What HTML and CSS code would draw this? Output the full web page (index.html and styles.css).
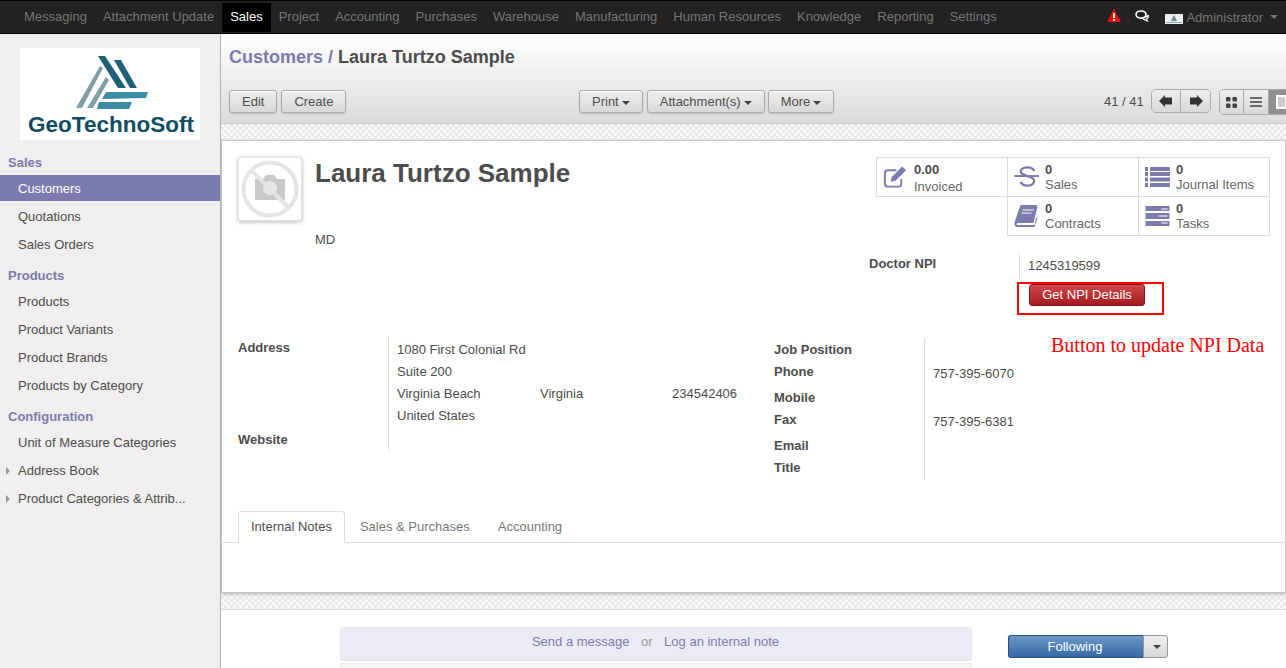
FILE: index.html
```html
<!DOCTYPE html>
<html lang="en">
<head>
<meta charset="utf-8">
<title>Customers</title>
<link rel="stylesheet" href="styles.css">
</head>
<body>
<nav class="topbar">
  <ul class="topmenu">
    <li>Messaging</li><li>Attachment Update</li><li class="active">Sales</li><li>Project</li><li>Accounting</li><li>Purchases</li><li>Warehouse</li><li>Manufacturing</li><li>Human Resources</li><li>Knowledge</li><li>Reporting</li><li>Settings</li>
  </ul>
  <div class="topright">
    <svg class="i-warn" width="14" height="13" viewBox="0 0 14 13"><path d="M7 0 14 13H0Z" fill="#f00"/><rect x="6" y="4" width="2" height="5" fill="#fff"/><rect x="6" y="10" width="2" height="2" fill="#fff"/></svg>
    <svg class="i-chat" width="14" height="12" viewBox="0 0 14 12"><ellipse cx="6" cy="4.5" rx="5" ry="3.5" fill="#222" stroke="#fff" stroke-width="1.6"/><path d="M10 7c2-.3 3-1 3-2 .8 2-.2 3.5-1.500 4l.8 2-3-1.600H8" fill="none" stroke="#fff" stroke-width="1.300"/></svg>
    <svg class="i-avatar" width="18" height="10" viewBox="0 0 18 10"><rect width="18" height="10" fill="#eee"/><path d="M9 1l3 6H6Z" fill="#5f8da0"/><rect x="1" y="8" width="16" height="1" fill="#8aa"/></svg>
    <span class="admin">Administrator</span><span class="caret caret-admin"></span>
  </div>
</nav>
<div class="app">
  <aside class="sidebar">
    <div class="logo">
      <svg class="logo-mark" width="76" height="56" viewBox="0 0 76 56">
        <path d="M22 1h7l21 32h-8Z" fill="#1f5f78"/><path d="M38 5h7l16 28h-7Z" fill="#1f5f78"/>
        <path d="M24 11l3 2L6 53H0Z" fill="#7f9ea8"/><path d="M30 22l3 3L17 53H11Z" fill="#7f9ea8"/>
        <path d="M30 37h42l-2 6-44 1Z" fill="#3d8ca6"/><path d="M23 47h33l-3 7H21Z" fill="#3d8ca6"/>
      </svg>
      <span class="logo-text">GeoTechnoSoft</span>
    </div>
    <h4 class="side-h first">Sales</h4>
    <a class="side-i cur">Customers</a><a class="side-i">Quotations</a><a class="side-i">Sales Orders</a>
    <h4 class="side-h">Products</h4>
    <a class="side-i">Products</a><a class="side-i">Product Variants</a><a class="side-i">Product Brands</a><a class="side-i">Products by Category</a>
    <h4 class="side-h">Configuration</h4>
    <a class="side-i">Unit of Measure Categories</a>
    <a class="side-i tree">Address Book</a>
    <a class="side-i tree">Product Categories &amp; Attrib...</a>
  </aside>
  <main class="main">
    <header class="cp">
      <h2 class="crumb"><span class="crumb-link">Customers</span><span class="crumb-sep"> / </span>Laura Turtzo Sample</h2>
      <div class="cp-row">
        <div class="cp-left"><button class="btn">Edit</button><button class="btn">Create</button></div>
        <div class="cp-mid">
          <button class="btn">Print<span class="caret"></span></button>
          <button class="btn">Attachment(s)<span class="caret"></span></button>
          <button class="btn btn-more">More<span class="caret"></span></button>
        </div>
        <div class="cp-right">
          <span class="pager">41 / 41</span>
          <div class="seg">
            <button class="seg-b"><svg width="14" height="12" viewBox="0 0 14 12"><path d="M0 6 6 0v2.500h7v7H6V12Z" fill="#333"/></svg></button>
            <button class="seg-b"><svg width="14" height="12" viewBox="0 0 14 12"><path d="M14 6 8 0v2.500H1v7h7V12Z" fill="#333"/></svg></button>
          </div>
          <div class="seg seg-view">
            <button class="seg-v"><svg width="11" height="11" viewBox="0 0 11 11"><rect width="4.500" height="4.500" rx="1" fill="#444"/><rect x="6.500" width="4.500" height="4.500" rx="1" fill="#444"/><rect y="6.500" width="4.500" height="4.500" rx="1" fill="#444"/><rect x="6.500" y="6.500" width="4.500" height="4.500" rx="1" fill="#444"/></svg></button>
            <button class="seg-v"><svg width="12" height="10" viewBox="0 0 12 10"><path d="M0 1h12M0 5h12M0 9h12" stroke="#444" stroke-width="1.600"/></svg></button>
            <button class="seg-v on"><span class="form-ico"></span></button>
          </div>
        </div>
      </div>
    </header>
    <div class="pattern top"></div>
    <section class="sheet">
      <div class="head">
        <div class="avatar">
          <svg width="62" height="62" viewBox="0 0 62 62">
            <circle cx="31" cy="31" r="26.500" fill="none" stroke="#e4e4e4" stroke-width="4"/>
            <path d="M16 21h8l3-4h8l3 4h8v21H16Z" fill="#c9c9c9"/><circle cx="31" cy="30" r="7" fill="#e6e6e6"/>
            <path d="M12 12 50 50" stroke="#e4e4e4" stroke-width="4"/>
          </svg>
        </div>
        <div class="who">
          <h1 class="name">Laura Turtzo Sample</h1>
          <div class="job">MD</div>
        </div>
        <div class="stats">
          <div class="stat">
            <svg class="si" width="25" height="24" viewBox="0 0 26 24"><path d="M19 14v5a3 3 0 0 1-3 3H5a3 3 0 0 1-3-3V8a3 3 0 0 1 3-3h9" fill="none" stroke="#7c7bad" stroke-width="2"/><path d="M9 12 20 1l4 4-11 11-5 1Z" fill="#7c7bad"/></svg>
            <div class="st st-inv"><b>0.00</b><span>Invoiced</span></div>
          </div>
          <div class="stat">
            <svg class="si" width="25" height="24" viewBox="0 0 26 24"><path d="M21 6c-1-3-3-4-7-4-4 0-7 2-7 4 0 3 4 4 7 5 3 1 7 2 7 5 0 3-3 5-7 5s-6-1-7-4" fill="none" stroke="#7c7bad" stroke-width="2.400"/><rect y="10" width="26" height="2" fill="#7c7bad"/></svg>
            <div class="st"><b>0</b><span>Sales</span></div>
          </div>
          <div class="stat">
            <svg class="si" width="25" height="20" viewBox="0 0 25 20"><path d="M0 0h3v4H0ZM5 0h20v4H5ZM0 5h3v4H0ZM5 5h20v4H5ZM0 10.500h3v4H0ZM5 10.500h20v4H5ZM0 16h3v4H0ZM5 16h20v4H5Z" fill="#7c7bad"/></svg>
            <div class="st"><b>0</b><span>Journal Items</span></div>
          </div>
          <div class="stat-gap"></div>
          <div class="stat">
            <svg class="si" width="24" height="22" viewBox="0 0 24 22"><path d="M6 0h16l1 2-4 16H4C2 18 1 20 4 20h16l2-8 1 1-3 9H3C0 22-.5 19 .5 16Z" fill="#7c7bad"/><path d="M8 5h11M7 8h10" stroke="#fff" stroke-width="1"/></svg>
            <div class="st"><b>0</b><span>Contracts</span></div>
          </div>
          <div class="stat">
            <svg class="si" width="24" height="20" viewBox="0 0 24 20"><path d="M0 0h24v5H0ZM0 7h24v6H0ZM0 15h24v5H0Z" fill="#7c7bad"/><path d="M16 3h6M13 10h9M16 17h6" stroke="#fff" stroke-width="1"/></svg>
            <div class="st"><b>0</b><span>Tasks</span></div>
          </div>
        </div>
      </div>
      <div class="npi">
        <label class="lbl npi-l">Doctor NPI</label>
        <div class="npi-v">
          <div class="npi-val">1245319599</div>
          <button class="btn-red">Get NPI Details</button>
        </div>
      </div>
      <div class="groups">
        <div class="g-left">
          <div class="g-labels"><label class="lbl">Address</label><label class="lbl web">Website</label></div>
          <div class="g-vals">
            <div>1080 First Colonial Rd</div>
            <div>Suite 200</div>
            <div class="cityrow"><span>Virginia Beach</span><span>Virginia</span><span>234542406</span></div>
            <div>United States</div>
          </div>
        </div>
        <div class="g-right">
          <div class="g-labels2">
            <label class="lbl l-job">Job Position</label>
            <label class="lbl l-ph">Phone</label>
            <label class="lbl l-mob">Mobile</label>
            <label class="lbl l-fax">Fax</label>
            <label class="lbl l-em">Email</label>
            <label class="lbl l-ti">Title</label>
          </div>
          <div class="g-vals2"><div class="v-ph">757-395-6070</div><div class="v-fax">757-395-6381</div></div>
        </div>
      </div>
      <div class="tabs">
        <a class="tab on">Internal Notes</a><a class="tab">Sales &amp; Purchases</a><a class="tab">Accounting</a>
      </div>
      <div class="note red-note">Button to update NPI Data</div>
      <div class="red-box"></div>
    </section>
    <div class="pattern bottom"></div>
    <section class="chatter">
      <div class="thread">
        <div class="compose"><a>Send a message</a><span class="or">or</span><a>Log an internal note</a></div>
        <div class="compose2"></div>
      </div>
      <div class="follow"><button class="fbtn">Following</button><button class="fcaret"><span class="caret"></span></button></div>
    </section>
  </main>
</div>
</body>
</html>
```
FILE: styles.css
```css
* { box-sizing: border-box; }
html, body { margin: 0; height: 100%; overflow: hidden; }
body { font-family: "Liberation Sans", Arial, sans-serif; font-size: 13px; color: #4c4c4c; background: #fff; }
ul, h1, h2, h4 { margin: 0; padding: 0; }
button { font-family: inherit; }

.topbar { height: 34px; background: #222; border-top: 1px solid #000; border-bottom: 1px solid #000; display: flex; justify-content: space-between; align-items: stretch; }
.topmenu { list-style: none; display: flex; padding: 2px 0 0 16px; }
.topmenu li { height: 29px; padding: 0 8px; line-height: 27px; color: #777; }
.topmenu li.active { background: #000; color: #fff; }
.topright { display: flex; align-items: center; padding-right: 8px; color: #777; }
.i-warn { margin: 0 14px 3px 0; }
.i-chat { margin: 0 16px 2px 0; }
.i-avatar { margin: 3px 3px 0 0; }
.caret { display: inline-block; margin-left: 3px; width: 0; height: 0; border-left: 4px solid transparent; border-right: 4px solid transparent; border-top: 4px solid #404040; vertical-align: middle; }
.caret-admin { border-top-color: #777; margin-left: 7px; }

.app { display: flex; height: 634px; }
.sidebar { width: 221px; flex: none; background: #f0eeee; border-right: 1px solid #b3b3b3; overflow: hidden; }
.logo { width: 180px; height: 92px; margin: 14px 0 0 20px; background: #fff; display: flex; flex-direction: column; align-items: center; padding-top: 7px; }
.logo-mark { margin-left: 8px; flex: none; }
.logo-text { font-size: 22.500px; line-height: 22px; font-weight: bold; color: #0f4c63; margin: 3px 0 0 2px; white-space: nowrap; }
.side-h { font-size: 13px; font-weight: bold; color: #7c7bad; height: 22px; line-height: 18px; padding-left: 8px; margin-top: 7px; }
.side-h.first { margin-top: 14px; height: 21px; }
.side-i { display: block; height: 28px; line-height: 26px; padding-left: 18px; color: #4c4c4c; }
.side-i.cur { height: 26px; line-height: 28px; background: #7c7bad; color: #fff; }
.side-i.cur + .side-i { margin-top: 3px; }
.tree { position: relative; }
.tree::before { content: ""; position: absolute; left: 6px; top: 9px; border-left: 4px solid #999; border-top: 4px solid transparent; border-bottom: 4px solid transparent; }

.main { flex: 1; min-width: 0; overflow: hidden; }
.cp { height: 90px; background: linear-gradient(#fff, #dcdcdc); border-bottom: 1px solid #cacaca; padding: 12px 0 0 8px; }
.crumb { font-size: 18px; line-height: 22px; font-weight: bold; color: #4c4c4c; }
.crumb-link { color: #7c7bad; }
.crumb-sep { color: #7c7bad; font-weight: bold; }
.cp-row { display: flex; margin-top: 22px; position: relative; }
.cp-left { width: 350px; display: flex; gap: 4px; }
.cp-mid { display: flex; gap: 4px; width: 525px; flex: none; }
.btn-more { margin-left: -1px; }
.cp-right { flex: 1; display: flex; align-items: flex-start; white-space: nowrap; overflow: hidden; margin-top: -1px; }
.btn { height: 23px; padding: 0 12px; font-size: 13px; line-height: 21px; color: #4c4c4c; background: linear-gradient(#efefef, #d8d8d8); border: 1px solid #ababab; border-radius: 3px; box-shadow: 0 1px 2px rgba(0,0,0,.15), inset 0 1px 0 #fff; white-space: nowrap; }
.pager { width: 52px; flex: none; line-height: 26px; color: #4c4c4c; }
.seg { display: flex; flex: none; width: 60px; height: 24px; border: 1px solid #ababab; border-radius: 5px; overflow: hidden; margin-left: -5px; }
.seg-b { width: 29px; height: 22px; padding: 0; border: 0; border-right: 1px solid #ababab; background: linear-gradient(#efefef, #d8d8d8); display: flex; align-items: center; justify-content: center; }
.seg-b:last-child { border-right: 0; }
.seg-view { margin-left: 8px; height: 26px; width: 80px; }
.seg-v { width: 24px; flex: none; height: 24px; padding: 0; border: 0; border-right: 1px solid #ababab; background: linear-gradient(#efefef, #d8d8d8); display: flex; align-items: center; justify-content: center; }
.seg-v:nth-child(2) { width: 25px; }
.seg-v.on { background: #8f8f8f; width: 32px; justify-content: flex-start; padding-left: 7px; }
.form-ico { display: block; width: 11px; height: 14px; background: #ccc; border: 2px solid #fff; }

.pattern { height: 16px; background: repeating-conic-gradient(#e9e9e9 0 25%, #f8f8f8 0 50%) 0 0 / 6px 6px; }
.sheet { position: relative; height: 453px; background: #fff; border-top: 1px solid #c9c8dc; border-left: 1px solid #c6c6c6; border-right: 1px solid #c6c6c6; border-bottom: 1px solid #c6c6c6; box-shadow: 0 1px 3px rgba(0,0,0,.25); }
.head { display: flex; padding: 16px 0 0 16px; height: 112px; }
.avatar { width: 64px; height: 64px; flex: none; border: 1px solid #e3e3e3; border-radius: 3px; background: #fff; box-shadow: 0 1px 4px rgba(0,0,0,.3); }
.who { width: 574px; flex: none; padding-left: 13px; }
.name { font-size: 26px; line-height: 32px; font-weight: bold; color: #4c4c4c; }
.job { margin-top: 42px; line-height: 18px; }
.stats { display: grid; flex: none; grid-template-columns: repeat(3, 131px); grid-auto-rows: 39px; width: 394px; height: 80px; border-top: 1px solid #ddd; }
.stat { display: flex; align-items: center; border: 1px solid #ddd; border-top: 0; margin-right: -1px; padding-left: 6px; }
.si { flex: none; margin-right: 6px; width: 25px; }
.st { display: flex; flex-direction: column; color: #666; }
.st b { color: #4c4c4c; font-size: 13px; line-height: 14px; }
.st span { font-size: 13px; line-height: 15px; }
.st-inv { padding-top: 3px; }
.st-inv span { margin-top: 2px; }

.lbl { display: block; font-weight: bold; color: #4c4c4c; }
.npi { display: flex; margin-left: 647px; height: 85px; }
.npi-l { width: 150px; padding-top: 2px; line-height: 18px; }
.npi-v { flex: 1; }
.npi-val { border-left: 1px solid #ddd; height: 26px; padding-left: 8px; line-height: 26px; color: #4c4c4c; }
.btn-red { display: block; margin: 5px 0 0 10px; width: 116px; height: 22px; padding: 0 0 2px; font-size: 13px; color: #fff; background: linear-gradient(#d0484c, #a51a1e); border: 1px solid #8a1417; border-radius: 3px; }
.groups { display: flex; height: 173px; padding-left: 16px; }
.g-left { width: 536px; display: flex; height: 114px; margin-top: -1px; }
.g-labels { width: 150px; padding-top: 1px; }
.g-labels .lbl { line-height: 20px; }
.web { margin-top: 72px; }
.g-vals { border-left: 1px solid #ddd; padding-left: 8px; flex: 1; padding-top: 2px; }
.g-vals > div { line-height: 22px; }
.cityrow { display: flex; }
.cityrow span:nth-child(1) { width: 143px; }
.cityrow span:nth-child(2) { width: 132px; }
.g-right { display: flex; height: 142px; }
.g-labels2 { width: 150px; padding-top: 3px; }
.g-labels2 .lbl { line-height: 18px; }
.l-ph { margin-top: 4px; }
.l-mob { margin-top: 8px; }
.l-fax { margin-top: 4px; }
.l-em { margin-top: 8px; }
.l-ti { margin-top: 4px; }
.g-vals2 { border-left: 1px solid #ddd; padding-left: 8px; }
.v-ph { margin-top: 27px; line-height: 18px; }
.v-fax { margin-top: 30px; line-height: 18px; }
.tabs { display: flex; border-bottom: 1px solid #ddd; height: 32px; padding-left: 16px; }
.tab { height: 32px; padding: 0 13px; line-height: 31px; color: #777; margin-right: 2px; }
.tab.on { color: #4c4c4c; background: #fff; border: 1px solid #ddd; border-bottom-color: #fff; border-radius: 3px 3px 0 0; padding: 0 12px; line-height: 29px; }
.red-note { position: absolute; left: 829px; top: 192px; font-family: "Liberation Serif", serif; font-size: 20px; line-height: 24px; color: #f00; white-space: nowrap; }
.red-box { position: absolute; left: 795px; top: 141px; width: 147px; height: 33px; border: 2px solid #f00; }

.pattern.bottom { height: 17px; border-bottom: 1px solid #ddd; }
.chatter { position: relative; display: flex; padding: 17px 0 0 119px; background: #fff; }
.thread { width: 632px; flex: none; }
.compose { height: 34px; background: #ebebf4; border-radius: 3px; border: 1px solid #e6e6ef; display: flex; justify-content: center; align-items: center; gap: 11.500px; color: #7c7bad; line-height: 28px; padding: 0 1px 4px 0; }
.or { color: #999; }
.compose2 { height: 8px; margin-top: 2px; background: #f6f6f6; border: 1px solid #eee; border-radius: 3px; }
.follow { display: flex; margin: 8px 0 0 36px; height: 23px; }
.fbtn { width: 135px; height: 23px; padding: 0 2px 0 0; font-size: 13px; color: #fff; background: linear-gradient(#6a97c7, #356aa5); border: 1px solid #2a4f7c; border-right: 0; border-radius: 3px 0 0 3px; }
.fcaret { width: 25px; height: 23px; padding: 0; background: linear-gradient(#efefef, #d8d8d8); border: 1px solid #999; border-radius: 0 3px 3px 0; }
```
